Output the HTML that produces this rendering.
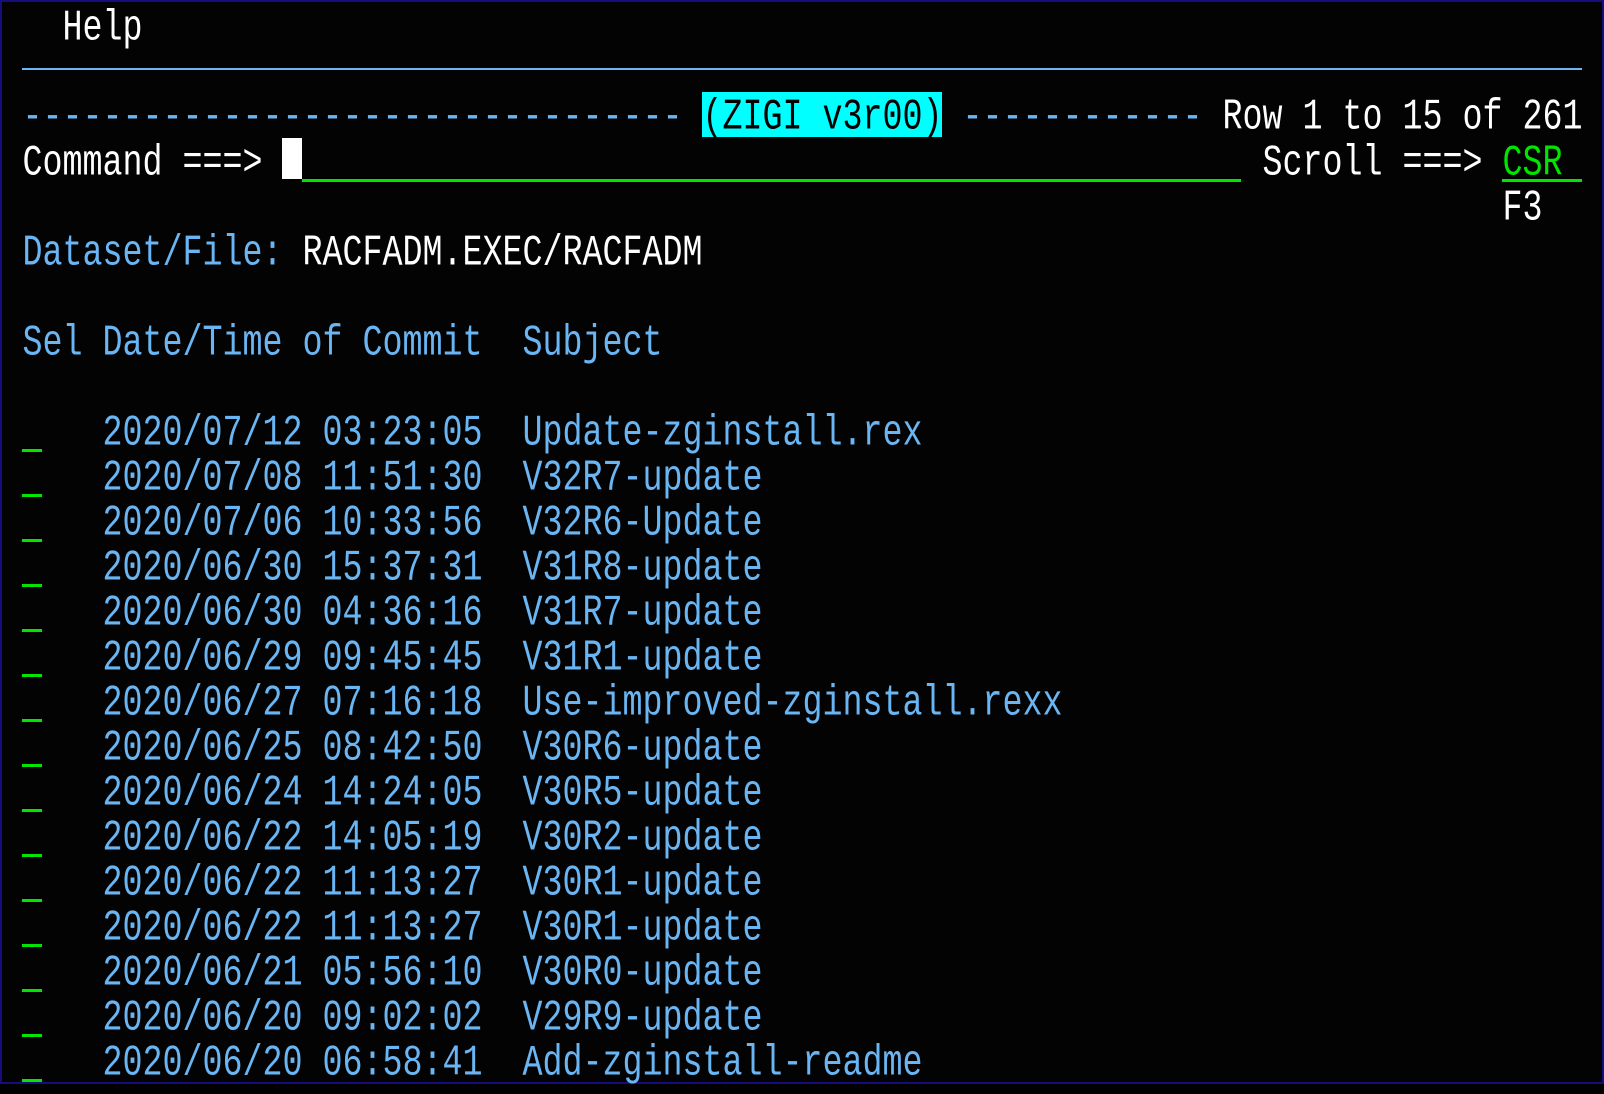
<!DOCTYPE html>
<html><head><meta charset="utf-8"><style>
html,body{margin:0;padding:0;background:#000;}
body{width:1604px;height:1084px;position:relative;overflow:hidden;}
.frame{position:absolute;left:0;top:0;width:1600px;height:1080px;border:2px solid #160c7c;background:#030303;}
.r{position:absolute;left:22.5px;height:45px;line-height:45px;font-family:"Liberation Mono",monospace;font-size:33.35px;white-space:pre;transform:translateY(4px) scaleY(1.3);transform-origin:50% 50%;color:#6ab6f4;}
.w{color:#fff}.g{color:#00e600}.b{color:#6ab6f4}
.u{position:absolute;left:22px;width:20px;height:3px;background:#00e600}
</style></head><body><div class="frame"></div>
<div class="r w" style="top:3px">  Help</div>
<div style="position:absolute;left:22px;top:68px;width:1560px;height:2px;background:#6ab6f4"></div>
<div class="r" style="top:92px">--------------------------------- </div>
<div style="position:absolute;left:702px;top:92px;width:240px;height:45px;background:#00ffff"></div>
<div class="r" style="top:92px;color:#000">                                  (ZIGI v3r00)</div>
<div class="r" style="top:92px">                                               ------------ <span class="w">Row 1 to 15 of 261</span></div>
<div class="r w" style="top:138px">Command ===>                                                  Scroll ===> <span class="g">CSR</span></div>
<div style="position:absolute;left:282px;top:138px;width:20px;height:41px;background:#fff"></div>
<div style="position:absolute;left:302px;top:179px;width:939px;height:3px;background:#00e600"></div>
<div style="position:absolute;left:1502px;top:179px;width:80px;height:3px;background:#00e600"></div>
<div class="r w" style="top:183px">                                                                          F3</div>
<div class="r" style="top:228px">Dataset/File: <span class="w">RACFADM.EXEC/RACFADM</span></div>
<div class="r" style="top:318px">Sel Date/Time of Commit  Subject</div>
<div class="r" style="top:408px">    2020/07/12 03:23:05  Update-zginstall.rex</div>
<div class="r" style="top:453px">    2020/07/08 11:51:30  V32R7-update</div>
<div class="r" style="top:498px">    2020/07/06 10:33:56  V32R6-Update</div>
<div class="r" style="top:543px">    2020/06/30 15:37:31  V31R8-update</div>
<div class="r" style="top:588px">    2020/06/30 04:36:16  V31R7-update</div>
<div class="r" style="top:633px">    2020/06/29 09:45:45  V31R1-update</div>
<div class="r" style="top:678px">    2020/06/27 07:16:18  Use-improved-zginstall.rexx</div>
<div class="r" style="top:723px">    2020/06/25 08:42:50  V30R6-update</div>
<div class="r" style="top:768px">    2020/06/24 14:24:05  V30R5-update</div>
<div class="r" style="top:813px">    2020/06/22 14:05:19  V30R2-update</div>
<div class="r" style="top:858px">    2020/06/22 11:13:27  V30R1-update</div>
<div class="r" style="top:903px">    2020/06/22 11:13:27  V30R1-update</div>
<div class="r" style="top:948px">    2020/06/21 05:56:10  V30R0-update</div>
<div class="r" style="top:993px">    2020/06/20 09:02:02  V29R9-update</div>
<div class="r" style="top:1038px">    2020/06/20 06:58:41  Add-zginstall-readme</div>
<div class="u" style="top:449px"></div>
<div class="u" style="top:494px"></div>
<div class="u" style="top:539px"></div>
<div class="u" style="top:584px"></div>
<div class="u" style="top:629px"></div>
<div class="u" style="top:674px"></div>
<div class="u" style="top:719px"></div>
<div class="u" style="top:764px"></div>
<div class="u" style="top:809px"></div>
<div class="u" style="top:854px"></div>
<div class="u" style="top:899px"></div>
<div class="u" style="top:944px"></div>
<div class="u" style="top:989px"></div>
<div class="u" style="top:1034px"></div>
<div class="u" style="top:1079px"></div>
</body></html>
